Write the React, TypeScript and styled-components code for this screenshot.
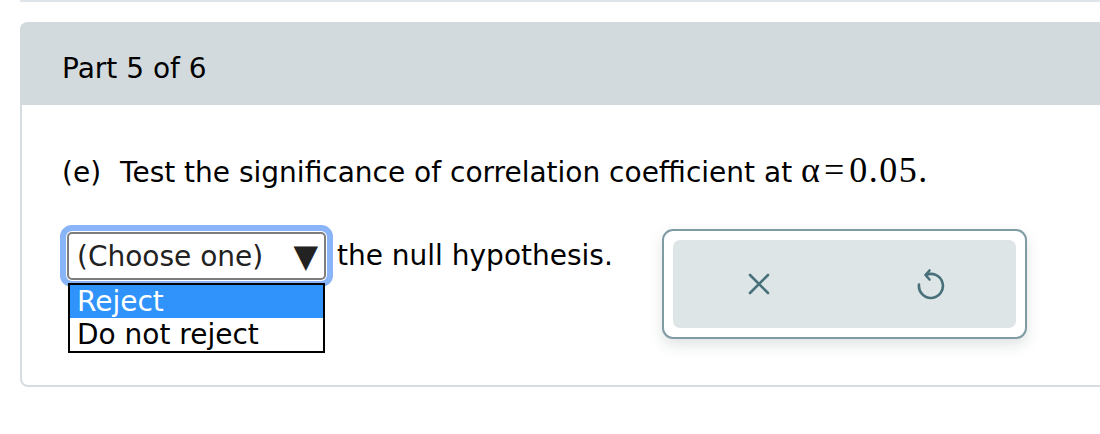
import { createGlobalStyle } from "styled-components";
import styled from "styled-components";

const GlobalStyle = createGlobalStyle`
  html, body {
    margin: 0;
    padding: 0;
    background: #ffffff;
  }
  body {
    font-family: "DejaVu Sans", Verdana, sans-serif;
    color: #000;
    overflow: hidden;
  }
`;

const Page = styled.div`
  width: 1100px;
  height: 434px;
  overflow: hidden;
`;

// bottom edge of the previous part's card
const PrevCard = styled.div`
  margin-left: 20px;
  margin-right: -20px;
  height: 0;
  border-left: 2px solid #dde5ea;
  border-bottom: 2px solid #dde5ea;
  border-bottom-left-radius: 6px;
`;

const Card = styled.section`
  margin: 20px -20px 0 20px;
  border: 2px solid #d5dde0;
  border-top: none;
  border-radius: 8px;
`;

const CardHeader = styled.div`
  display: flex;
  align-items: center;
  box-sizing: border-box;
  height: 83px;
  margin: 0 -2px;
  padding: 9px 0 0 42px;
  background: #d2dadd;
  border-radius: 8px 8px 0 0;
  font-size: 28px;
`;

const CardBody = styled.div`
  padding: 50px 40px 46px 40px;
`;

const Question = styled.p`
  margin: 0;
  font-size: 28px;
  line-height: 36px;
  white-space: nowrap;
`;

const Label = styled.span`
  margin-right: 19px;
`;

const MathText = styled.span`
  font-family: "Liberation Serif", "Times New Roman", serif;
  font-size: 36px;
  line-height: 0;
`;

const MathOp = styled.span`
  margin: 0 5px 0 4px;
`;

const Digits = styled.span`
  letter-spacing: 1.5px;
`;

const AnswerRow = styled.div`
  display: flex;
  align-items: flex-start;
  margin-top: 33px;
  padding-left: 5px;
`;

const SelectWrap = styled.div`
  position: relative;
  margin-top: 8px;
`;

const SelectBox = styled.div`
  display: flex;
  align-items: center;
  justify-content: space-between;
  box-sizing: border-box;
  width: 259px;
  height: 48px;
  padding: 0 6px 0 8px;
  border: 2px solid #7d7d7d;
  border-radius: 5px;
  background: #fff;
  color: #222;
  font-size: 28px;
  box-shadow: 0 0 0 1px #fff, 0 0 0 7px #8ab4f8;
`;

const Caret = styled.span`
  font-size: 32px;
  line-height: 1;
  color: #222;
`;

const OptionList = styled.ul`
  position: absolute;
  left: 1px;
  top: 51px;
  box-sizing: border-box;
  width: 257px;
  margin: 0;
  padding: 0;
  list-style: none;
  border: 2px solid #000;
  background: #fff;
  z-index: 2;
`;

const OptionItem = styled.li<{ $active?: boolean }>`
  height: 33px;
  padding-left: 7px;
  font-size: 28px;
  line-height: 33px;
  background: ${(p) => (p.$active ? "#2f93fb" : "#fff")};
  color: ${(p) => (p.$active ? "#fff" : "#000")};
`;

const Trailing = styled.span`
  margin-top: 14px;
  margin-left: 11px;
  font-size: 28px;
  line-height: 36px;
  white-space: nowrap;
`;

const ToolPanel = styled.div`
  display: flex;
  flex-shrink: 0;
  box-sizing: border-box;
  width: 365px;
  height: 110px;
  margin-top: 5px;
  margin-left: 49px;
  padding: 9px;
  border: 2px solid #7f9ba3;
  border-radius: 11px;
  background: #fff;
  box-shadow: 0 6px 14px rgba(60, 80, 90, 0.16);
`;

const ToolInner = styled.div`
  display: flex;
  flex: 1;
  background: #dee5e7;
  border-radius: 7px;
`;

const ToolButton = styled.button`
  flex: 1;
  display: flex;
  align-items: center;
  justify-content: center;
  border: none;
  background: transparent;
  padding: 0;
  color: #47707a;
  cursor: pointer;
`;

function ClearIcon() {
  return (
    <svg width="24" height="24" viewBox="0 0 24 24" fill="none" stroke="currentColor" strokeWidth="2.6" strokeLinecap="round">
      <path d="M3 3 L21 21 M21 3 L3 21" />
    </svg>
  );
}

function UndoIcon() {
  return (
    <svg width="30" height="32" viewBox="0 0 30 32" fill="none" stroke="currentColor" strokeWidth="2.6" strokeLinecap="round" strokeLinejoin="round">
      <path d="M11 7 A12 12 0 1 1 4 16.5" />
      <path d="M14.5 2.5 L10.5 7 L14.5 11.5" />
    </svg>
  );
}

export default function App() {
  return (
    <Page>
      <GlobalStyle />
      <PrevCard />
      <Card>
        <CardHeader>Part 5 of 6</CardHeader>
        <CardBody>
          <Question>
            <Label>(e)</Label>Test the significance of correlation coefficient at{" "}
            <MathText>
              α<MathOp>=</MathOp>
              <Digits>0.05.</Digits>
            </MathText>
          </Question>
          <AnswerRow>
            <SelectWrap>
              <SelectBox>
                <span>(Choose one)</span>
                <Caret>▼</Caret>
              </SelectBox>
              <OptionList>
                <OptionItem $active>Reject</OptionItem>
                <OptionItem>Do not reject</OptionItem>
              </OptionList>
            </SelectWrap>
            <Trailing>the null hypothesis.</Trailing>
            <ToolPanel>
              <ToolInner>
                <ToolButton aria-label="Clear">
                  <ClearIcon />
                </ToolButton>
                <ToolButton aria-label="Undo">
                  <UndoIcon />
                </ToolButton>
              </ToolInner>
            </ToolPanel>
          </AnswerRow>
        </CardBody>
      </Card>
    </Page>
  );
}
